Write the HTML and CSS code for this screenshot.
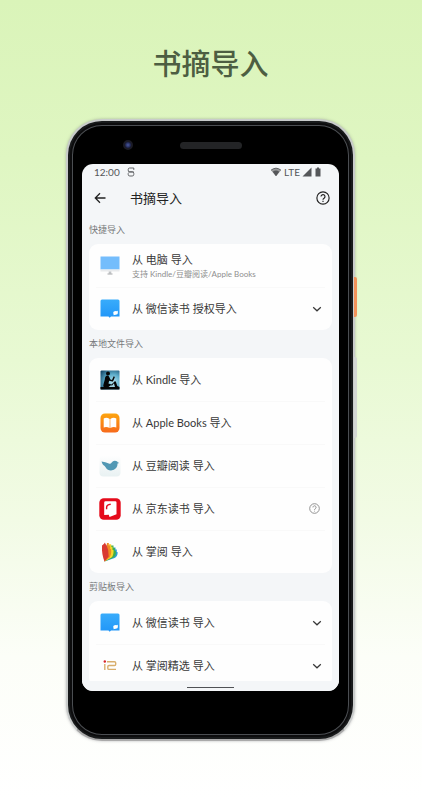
FILE: index.html
```
<!DOCTYPE html>
<html lang="zh-CN">
<head>
  <meta charset="utf-8">
  <meta name="viewport" content="width=device-width, initial-scale=1">
  <title>书摘导入</title>
  <link rel="stylesheet" href="styles.css">
</head>
<body>

<!-- shared icons -->
<svg class="sprite" aria-hidden="true">
  <symbol id="chevron" viewBox="0 0 10 10">
    <path d="M1.200 3.200 5 6.800 8.800 3.200" fill="none" stroke="currentColor" stroke-width="1.200"/>
  </symbol>
  <symbol id="help" viewBox="0 0 24 24">
    <circle cx="12" cy="12" r="10.500" fill="none" stroke="currentColor" stroke-width="2"/>
    <path d="M8.600 9.600a3.400 3.400 0 1 1 5.600 2.500c-1.300 1-2.200 1.500-2.200 3" fill="none" stroke="currentColor" stroke-width="2"/>
    <path d="M11 16.800h2v2h-2z" fill="currentColor"/>
  </symbol>
  <symbol id="weread" viewBox="0 0 20 20">
    <defs>
      <linearGradient id="blue" x1="0" y1="0" x2="0" y2="1">
        <stop offset="0" stop-color="#38acfb"/>
        <stop offset="1" stop-color="#2196f8"/>
      </linearGradient>
    </defs>
    <path d="M2 .5h16q1.500 0 1.500 1.500v15.500H11l-1.300 1.200-1.200-1.200h-8V2Q.5.500 2 .5z" fill="url(#blue)"/>
    <ellipse cx="15.600" cy="13.800" rx="2.400" ry="1.900" fill="#fff"/>
    <path d="m13.500 16.300.3-2.300 2 1.500zM16 12.200l1.600-.5.300 1.600z" fill="#fff"/>
  </symbol>
</svg>

<h1 class="headline">书摘导入</h1>

<div class="phone">
  <span class="camera"></span>
  <span class="speaker"></span>
  <span class="side-key power"></span>
  <span class="side-key volume"></span>

  <div class="screen">
    <div class="status-bar">
      <span>12:00</span>
      <svg class="status-app" viewBox="0 0 8 10">
        <path d="M6.800 2.900V1H2.600Q1.200 1 1.200 2.600v.5q0 1.700 1.500 1.700h2.600q1.500 0 1.500 1.700v.9Q6.800 9 5.200 9H2.800Q1.200 9 1.200 7.400V6.200M1.200 5h5.600" fill="none" stroke="currentColor" stroke-width=".9"/>
      </svg>
      <span class="status-right">
        <svg class="wifi" viewBox="0 0 12 10">
          <path d="M1 3.200Q6-.8 11 3.200L6 9.300z" fill="#9a9b9c"/>
          <path d="M2.700 4.700Q6 2.500 9.300 4.700L6 9.300z" fill="currentColor"/>
          <path d="M1 3.200Q6-.8 11 3.200" fill="none" stroke="currentColor" stroke-width=".9"/>
        </svg>
        <span>LTE</span>
        <svg class="signal" viewBox="0 0 10 10"><path d="M9.500.5v9h-9z" fill="currentColor"/></svg>
        <svg class="battery" viewBox="0 0 6 10"><path d="M2 .5h2v1h1.500v8h-5v-8H2z" fill="currentColor"/></svg>
      </span>
    </div>

    <header class="app-bar">
      <button class="icon-btn" type="button" aria-label="返回">
        <svg class="back" viewBox="0 0 12 12"><path d="M11.500 6H1.500M6 1.300 1.300 6 6 10.700" fill="none" stroke="currentColor" stroke-width="1.300"/></svg>
      </button>
      <h2>书摘导入</h2>
      <button class="icon-btn" type="button" aria-label="帮助">
        <svg class="help-lg"><use href="#help"/></svg>
      </button>
    </header>

    <main class="content">
      <h3>快捷导入</h3>
      <ul class="card">
        <li>
          <button class="item" type="button">
            <svg class="logo" viewBox="0 0 20 20">
              <path d="M.5.500h19v13H.5z" fill="#74bdfc"/>
              <path d="M.5 13.500h19v2H.5z" fill="#e9ebed"/>
              <path d="M8.700 15.500h2.600v2.200H8.700z" fill="#bfc2c5"/>
              <path d="M7.500 17.500h5v1h-5z" fill="#a4a6a8"/>
            </svg>
            <span class="text">
              <span>从 电脑 导入</span>
              <small>支持 Kindle/豆瓣阅读/Apple Books</small>
            </span>
          </button>
        </li>
        <li>
          <button class="item" type="button">
            <svg class="logo"><use href="#weread"/></svg>
            <span class="text">从 微信读书 授权导入</span>
            <svg class="chevron"><use href="#chevron"/></svg>
          </button>
        </li>
      </ul>

      <h3>本地文件导入</h3>
      <ul class="card">
        <li>
          <button class="item" type="button">
            <svg class="logo" viewBox="0 0 20 20">
              <defs>
                <radialGradient id="dusk" cx=".65" cy=".6" r=".8">
                  <stop offset="0" stop-color="#b4e3ee"/>
                  <stop offset=".5" stop-color="#5eaecb"/>
                  <stop offset="1" stop-color="#164a6b"/>
                </radialGradient>
              </defs>
              <rect x=".5" y=".5" width="19" height="19" rx="1" fill="url(#dusk)"/>
              <circle cx="8" cy="3.600" r="2" fill="#050505"/>
              <path d="M.5 17h3.200q-.8-1.200-.2-2.800l1.300-4.700q.2-3.700 2.800-3.900 1.200.1 1.900 1.900l.9 1.900 1.600.6 1.700-3.700 1.200.6-1.900 4.500-.8.200-3-.8-.8 2.600 3.100 1 3.300-3.100 1 .2 1.500 4.500 2.200 1v2.500H.5z" fill="#050505"/>
              <path d="m8.500 17 2.300-1.700 1.300.2 1.800-2.200 1.100 3.700z" fill="#a1d3e1"/>
            </svg>
            <span class="text">从 Kindle 导入</span>
          </button>
        </li>
        <li>
          <button class="item" type="button">
            <svg class="logo" viewBox="0 0 20 20">
              <defs>
                <linearGradient id="orange" x1="0" y1="0" x2="0" y2="1">
                  <stop offset="0" stop-color="#fda50f"/>
                  <stop offset="1" stop-color="#f76a1c"/>
                </linearGradient>
              </defs>
              <rect x=".5" y=".5" width="19" height="19" rx="4.500" fill="url(#orange)"/>
              <path d="M9.700 5.900q-3-1.900-6-.5v9q3-1 6 .6zM10.300 5.900q3-1.900 6-.5v9q-3-1-6 .6z" fill="#fff"/>
            </svg>
            <span class="text">从 Apple Books 导入</span>
          </button>
        </li>
        <li>
          <button class="item" type="button">
            <svg class="logo big" viewBox="0 0 22 22">
              <defs>
                <linearGradient id="mist" x1="0" y1="0" x2="0" y2="1">
                  <stop offset="0" stop-color="#fefefe"/>
                  <stop offset="1" stop-color="#e8f1f2"/>
                </linearGradient>
              </defs>
              <rect x=".5" y=".5" width="21" height="21" rx="4" fill="url(#mist)"/>
              <path d="M2.500 6.500q4 .3 7.300 2 1.800.7 2.900-1 1.500-2.500 4.500-1.600 1.300.4 1.500 1.300l1.500.8-1.600.6q0 6.400-6.600 6.900-3.600 0-5.400-3.200-.8-1.400-2.300-2.300Q3.200 8.800 2.500 6.500z" fill="#5198b4"/>
            </svg>
            <span class="text">从 豆瓣阅读 导入</span>
          </button>
        </li>
        <li>
          <button class="item" type="button">
            <svg class="logo big" viewBox="0 0 22 22">
              <rect x=".3" y=".3" width="21.400" height="21.400" rx="4.500" fill="#e50b1b"/>
              <path d="M6.500 3.300h9.700q1.300 0 1.300 1.300v11.600l-7 2.800-.7-2.200-4.600.2V4.600q0-1.300 1.300-1.300z" fill="#fff"/>
              <path d="M7.600 11.300V9.600q0-2.400 2.300-3l1.800-.4" fill="none" stroke="#e50b1b" stroke-width="1.400"/>
            </svg>
            <span class="text">从 京东读书 导入</span>
          </button>
          <button class="icon-btn row-help" type="button" aria-label="京东读书导入说明">
            <svg class="help-sm"><use href="#help"/></svg>
          </button>
        </li>
        <li>
          <button class="item" type="button">
            <svg class="logo" viewBox="0 0 20 20">
              <path d="M13 5.500h2.500v2h1.300v2.600h.8q.4 4-3 6L4.500 19.500z" fill="#2b9fd2"/>
              <path d="M11 3.500h2.500V6h1.300v3h1q.6 4.500-2.300 6.500l-9 4z" fill="#42af48"/>
              <path d="M9 2.300h2.200v2.400h1.300v3.200h1q.5 5-2 7.600l-7 4z" fill="#f6d72c"/>
              <path d="M7 1h1.800v2.500h1.400V7h.9q.5 5.500-1.500 8.500l-5.100 4z" fill="#ef8c23"/>
              <path d="M2 3.500 3.800 2 5 .5q.2 1.500 1.500 2.500 2.500 5 2.200 11.500l-4.200 5Q1.500 12 2 3.500z" fill="#d93a33"/>
            </svg>
            <span class="text">从 掌阅 导入</span>
          </button>
        </li>
      </ul>

      <h3>剪贴板导入</h3>
      <ul class="card">
        <li>
          <button class="item" type="button">
            <svg class="logo"><use href="#weread"/></svg>
            <span class="text">从 微信读书 导入</span>
            <svg class="chevron"><use href="#chevron"/></svg>
          </button>
        </li>
        <li>
          <button class="item" type="button">
            <svg class="logo" viewBox="0 0 20 20">
              <path d="M4.800 8v6M7 5.800h7.500q1.200 0 1.200 1.200v1.300q0 1.200-1.200 1.200H9q-1.200 0-1.200 1.200v1.500q0 1.200 1.200 1.200h7" fill="none" stroke="#d8ae6c" stroke-width="1.400"/>
              <circle cx="4.800" cy="5.500" r="1.200" fill="#d9252c"/>
            </svg>
            <span class="text">从 掌阅精选 导入</span>
            <svg class="chevron"><use href="#chevron"/></svg>
          </button>
        </li>
      </ul>
    </main>

    <div class="nav-bar"><span></span></div>
  </div>
</div>

</body>
</html>
```
FILE: styles.css
```
* {
  box-sizing: border-box;
}

body {
  margin: 0;
  min-height: 100vh;
  padding: 40px 67px 59px 66px;
  font-family: Lato, "Noto Sans CJK SC", sans-serif;
  color: #333;
  background: linear-gradient(#daf4b9 0%, #dff6c2 20%, #e8f9d3 45%, #f2fbe5 65%, #fcfef8 82%, #fff 100%);
}

h1, h2, h3, ul {
  margin: 0;
  padding: 0;
  font-weight: 400;
}

svg {
  display: block;
  flex: none;
}

.sprite {
  position: absolute;
  width: 0;
  height: 0;
}

.headline {
  margin-bottom: 31px;
  font-size: 29px;
  font-weight: 500;
  line-height: 48px;
  text-align: center;
  color: #4d5e42;
}

/* phone frame */
.phone {
  position: relative;
  padding: 43px 14px 48px;
  border: 2px solid #c9cccb;
  border-bottom-color: #aaa;
  border-radius: 36px;
  background: #000;
  box-shadow:
    inset 0 0 0 2px #181a1b,
    inset 0 0 0 4px #0c0c0d,
    inset 0 0 0 5px #4b4e52,
    0 0 3px rgba(90, 90, 100, 0.4);
}

.camera {
  position: absolute;
  top: 19px;
  left: 55px;
  width: 10px;
  height: 10px;
  border: 2px solid #1b1b25;
  border-radius: 50%;
  background: radial-gradient(#4b5aa0, #1b2148 70%);
}

.speaker {
  position: absolute;
  top: 21px;
  left: 50%;
  width: 62px;
  height: 7px;
  margin-left: -31px;
  border-radius: 4px;
  background: #232426;
}

.side-key {
  position: absolute;
  right: -4px;
  width: 3px;
  border-radius: 0 2px 2px 0;
}

.power {
  top: 156px;
  height: 40px;
  background: #f2935a;
}

.volume {
  top: 236px;
  height: 81px;
  background: #d3d6d3;
}

.screen {
  overflow: hidden;
  border-radius: 11px;
  background: #f4f6f8;
}

.status-bar {
  display: flex;
  align-items: center;
  gap: 7px;
  height: 16px;
  padding: 0 17px 0 12px;
  font-size: 10px;
  line-height: 16px;
  color: #55575a;
}

.status-right {
  display: flex;
  align-items: center;
  gap: 2px;
  margin-left: auto;
}

.status-app {
  width: 8px;
  height: 10px;
}

.wifi {
  width: 12px;
  height: 10px;
}

.signal {
  width: 10px;
  height: 10px;
}

.battery {
  width: 8px;
  height: 10px;
}

.app-bar {
  display: flex;
  align-items: center;
  height: 36px;
  padding: 0 9px 0 12px;
  color: #222;
}

.app-bar h2 {
  flex: 1;
  padding-left: 24px;
  font-size: 13px;
  line-height: 20px;
}

.icon-btn {
  padding: 0;
  border: 0;
  background: none;
  color: inherit;
}

.back {
  width: 12px;
  height: 12px;
}

.help-lg {
  width: 14px;
  height: 14px;
}

/* import list */
.content {
  padding: 0 7px;
}

.content h3 {
  font-size: 9px;
  line-height: 28px;
  color: #77797b;
}

.card {
  list-style: none;
  border-radius: 9px;
  background: #fefefe;
}

.card li {
  display: flex;
  align-items: center;
  height: 43px;
}

.card li + li {
  background: linear-gradient(#f9f9f9, #f9f9f9) center top / calc(100% - 14px) 1px no-repeat;
}

.item {
  display: flex;
  flex: 1;
  align-items: center;
  gap: 12px;
  height: 43px;
  padding: 0 10px 0 11px;
  border: 0;
  background: none;
  font: inherit;
  font-size: 11px;
  line-height: 16px;
  text-align: left;
  color: #383838;
}

.text {
  flex: 1;
}

.text span,
.text small {
  display: block;
}

.text small {
  font-size: 8px;
  line-height: 12px;
  color: #8e8e8e;
}

.logo {
  width: 20px;
  height: 20px;
}

.big {
  width: 22px;
  height: 22px;
  margin: 0 -1px;
}

.chevron {
  width: 10px;
  height: 10px;
}

.row-help {
  margin-right: 12px;
  color: #898989;
}

.help-sm {
  width: 11px;
  height: 11px;
}

.nav-bar {
  position: relative;
  display: flex;
  justify-content: center;
  height: 10px;
  margin-top: -6px;
  padding-top: 6px;
  background: #f4f6f8;
}

.nav-bar span {
  width: 47px;
  height: 1px;
  background: #505255;
}
```
